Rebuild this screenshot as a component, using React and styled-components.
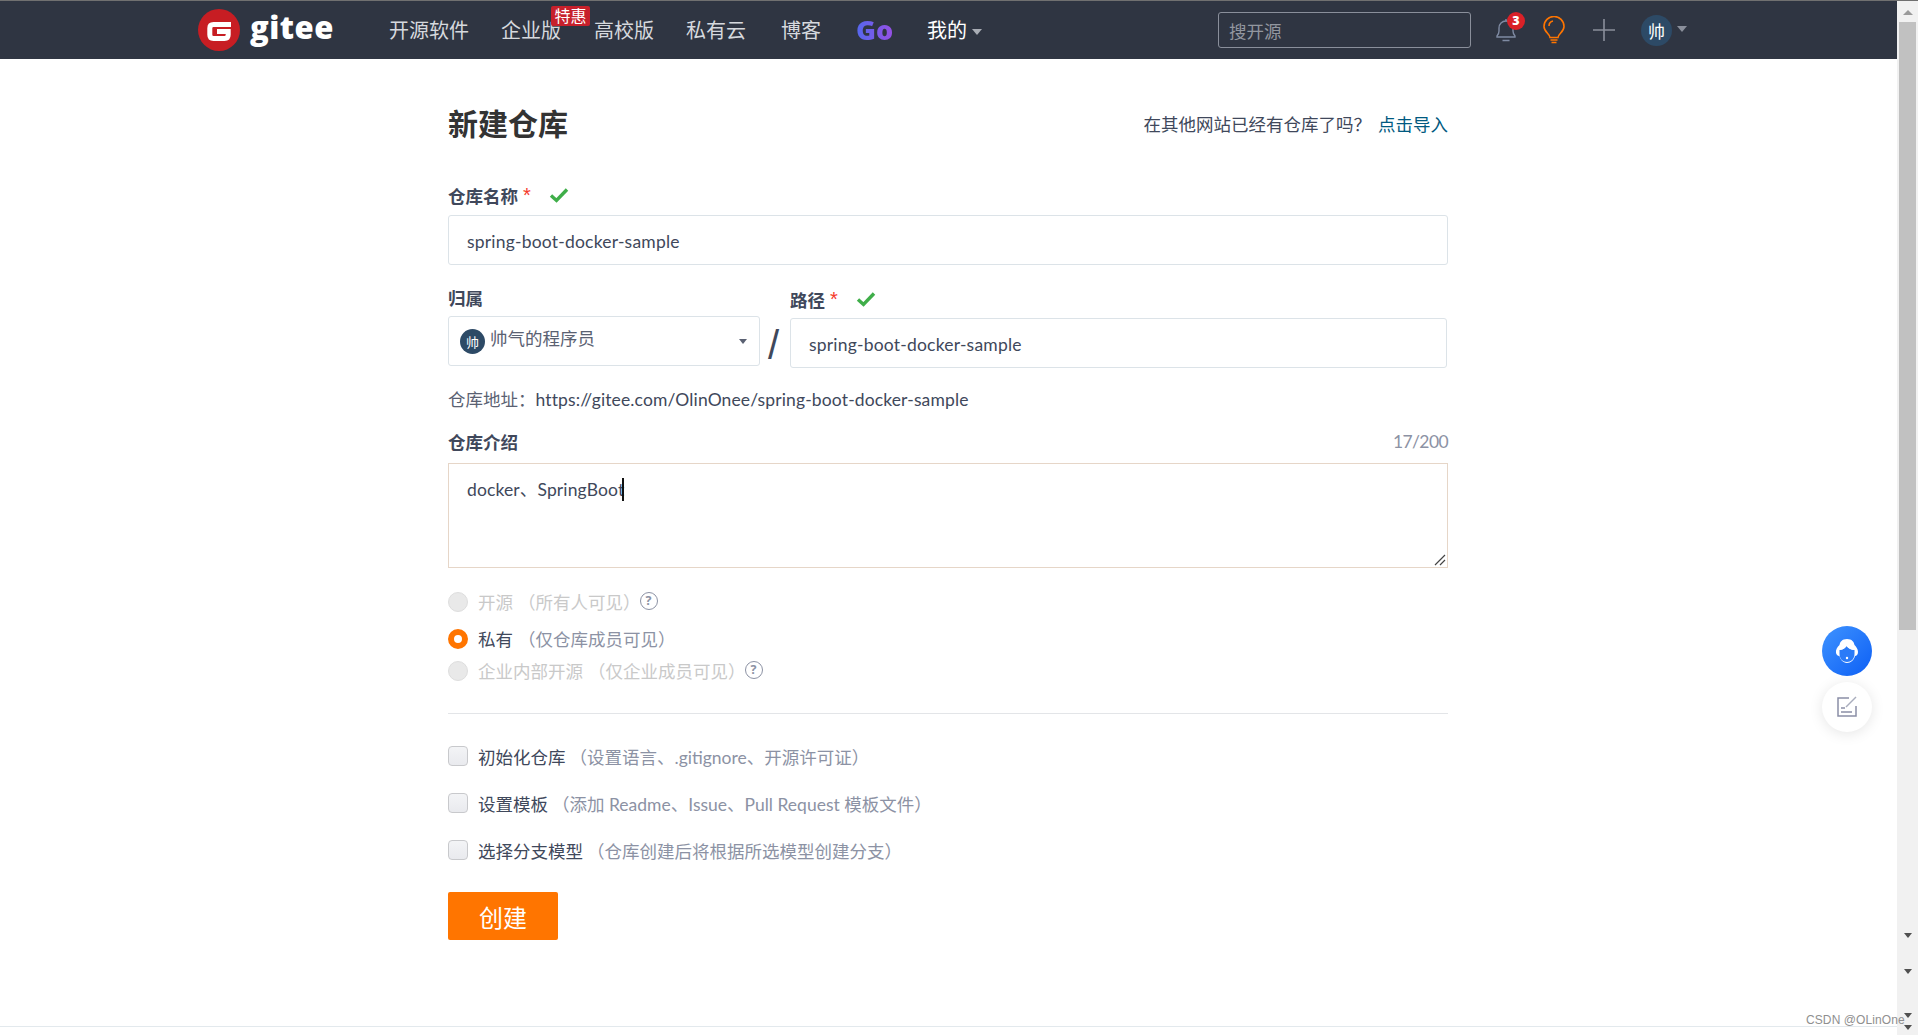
import React from "react";
import styled, { createGlobalStyle } from "styled-components";

const Global = createGlobalStyle`
  html, body { margin: 0; padding: 0; background: #fff; overflow: hidden; }
  body { font-family: Lato, "Noto Sans CJK SC", sans-serif; color: #40485b; }
  * { box-sizing: border-box; }
`;

const Frame = styled.div`
  position: relative; width: 1918px; height: 1035px; display: flex; flex-direction: column; overflow: hidden;
`;
const TopLine = styled.div`height: 1px; background: #707070; flex: none;`;
const Body = styled.div`flex: 1; display: flex; min-height: 0;`;
const Page = styled.div`flex: 1; display: flex; flex-direction: column; min-width: 0;`;

const Scrollbar = styled.div`
  width: 21px; flex: none; background: #f1f1f1; display: flex; flex-direction: column; align-items: center;
`;
const ArrowUp = styled.div`
  margin-top: 9px; width: 0; height: 0; border-left: 5px solid transparent; border-right: 5px solid transparent; border-bottom: 5px solid #9a9a9a;
`;
const Thumb = styled.div`margin-top: 7px; width: 17px; height: 608px; background: #c1c1c1;`;
const ArrowDown = styled.div`
  margin-top: ${p => p.$gap}px; width: 0; height: 0; border-left: 4.5px solid transparent; border-right: 4.5px solid transparent; border-top: 5px solid #505050;
`;

const Nav = styled.header`
  height: 58px; flex: none; background: #2f3542; display: flex; align-items: center; padding-left: 198px; font-family: Lato, "Noto Sans CJK SC", sans-serif;
`;
const Logo = styled.div`display: flex; align-items: center; gap: 10px; width: 191px; flex: none;`;
const LogoWord = styled.span`
  font: 800 31px/42px "Open Sans", sans-serif; color: #fff; letter-spacing: 0.5px; position: relative; top: -3px;
`;
const NavItem = styled.a`
  position: relative; flex: none; margin-right: ${p => p.$mr}px; font-size: 20px; line-height: 58px; color: ${p => p.$light ? "#fff" : "#d6d9de"};
`;
const Ribbon = styled.span`
  position: absolute; left: 50px; top: 5px; width: 39px; height: 20px; background: #c7202b; color: #fff; border-radius: 2px;
  font-size: 16px; line-height: 20px; text-align: center;
`;
const GoWord = styled.span`
  flex: none; margin-right: 34px; font: 800 27px/58px "Open Sans", sans-serif; width: 37px;
  background: linear-gradient(90deg, #5468ee, #9650e4); -webkit-background-clip: text; background-clip: text; color: transparent;
`;
const NavCaret = styled.i`
  flex: none; margin: 4px 236px 0 5px; width: 0; height: 0; border-left: 5.5px solid transparent; border-right: 5.5px solid transparent; border-top: 6px solid #a9adb5;
`;
const Search = styled.input`
  flex: none; width: 253px; height: 36px; background: transparent; border: 1px solid #8a8f9b; border-radius: 3px; padding: 0 10px; color: #fff;
  font: 17.5px "Noto Sans CJK SC", sans-serif; outline: none;
  &::placeholder { color: #92969f; opacity: 1; }
`;
const IconSlot = styled.div`position: relative; flex: none; margin-left: ${p => p.$ml}px; display: flex; align-items: center;`;
const Badge = styled.span`
  position: absolute; left: 13px; top: -4px; width: 18px; height: 18px; border-radius: 50%; background: #da2128; color: #fff;
  font: 800 12.5px/18px "Open Sans", sans-serif; text-align: center;
`;
const Avatar = styled.span`
  flex: none; width: ${p => p.$size}px; height: ${p => p.$size}px; border-radius: 50%; background: #2d4a66; color: #fff; display: inline-flex; align-items: center; justify-content: center;
  font-size: ${p => p.$fs}px; margin-left: ${p => p.$ml || 0}px;
`;
const AvatarCaret = styled.i`
  margin: -3px 0 0 5px; width: 0; height: 0; border-left: 5.5px solid transparent; border-right: 5.5px solid transparent; border-top: 6px solid #8a8f9b;
`;

const Main = styled.main`width: 1000px; margin-left: 448px; flex: 1;`;
const TitleRow = styled.div`display: flex; align-items: center; justify-content: space-between; height: 40px; margin-top: 44px;`;
const Title = styled.h1`margin: 0; font-size: 30px; font-weight: 700; color: #333; line-height: 40px;`;
const ImportHint = styled.div`font-size: 17.5px; color: #40485b;`;
const ImportLink = styled.a`color: #005980; margin-left: 7px;`;

const Label = styled.div`
  display: flex; align-items: center; justify-content: space-between; height: 24px; font-size: 17.5px; font-weight: 700; color: #40485b; margin-top: ${p => p.$mt || 0}px;
`;
const LabelLeft = styled.span`display: inline-flex; align-items: center;`;
const Star = styled.span`color: #f5392b; font: 400 20px/20px "Liberation Sans", sans-serif; margin-left: 5px;`;
const Check = styled.svg`margin-left: 18px; width: 20px; height: 16px;`;
const Counter = styled.span`font-weight: 400; color: #8c92a4; letter-spacing: -.6px;`;

const TextInput = styled.input`
  display: block; width: 100%; height: 50px; border: 1px solid #dce3e8; border-radius: 3px; padding: 2px 18px 0; margin-top: ${p => p.$mt}px;
  font: 17.5px Lato, "Noto Sans CJK SC", sans-serif; letter-spacing: .2px; color: #40485b; outline: none; background: #fff;
`;
const PathRow = styled.div`display: flex; margin-top: 20px;`;
const OwnerCol = styled.div`width: 312px; flex: none;`;
const Slash = styled.div`
  width: 30px; flex: none; margin-top: 35px; padding-right: 3px; font: 40px/50px "Liberation Sans", sans-serif; color: #40485b; text-align: center;
`;
const PathCol = styled.div`flex: 1; margin-top: 2px; margin-right: 1px;`;
const Select = styled.div`
  display: flex; align-items: center; height: 50px; border: 1px solid #dce3e8; border-radius: 3px; padding: 0 12px 0 11px; margin-top: 7px; font-size: 17.5px; color: #5a6172;
`;
const OwnerName = styled.span`flex: 1; margin-left: 5px; line-height: 1; margin-top: -4px;`;
const SelectCaret = styled.i`
  width: 0; height: 0; border-left: 4.5px solid transparent; border-right: 4.5px solid transparent; border-top: 5px solid #5a6172;
`;
const Address = styled.div`font-size: 17.5px; line-height: 24px; margin-top: 18px; color: #40485b; letter-spacing: .13px;`;
const AddressKey = styled.span`color: #5a6172; letter-spacing: 0;`;

const TextArea = styled.div`
  position: relative; height: 105px; margin-top: 10px; border: 1px solid #e6d6c8; padding: 14px 18px; font-size: 17.5px; line-height: 24px; letter-spacing: .13px; color: #40485b;
`;
const Caret = styled.span`
  display: inline-block; width: 2px; height: 23px; background: #111; margin-left: -2px; vertical-align: -5px;
`;
const Grip = styled.svg`position: absolute; right: 1px; bottom: 1px; width: 12px; height: 12px;`;

const Radios = styled.div`margin-top: 21px;`;
const RadioRow = styled.label`
  display: flex; align-items: center; height: 24px; margin-top: ${p => p.$mt}px; font-size: 17.5px; color: ${p => p.$off ? "#c9c9c9" : "#40485b"};
`;
const RadioDot = styled.span`
  flex: none; width: 20px; height: 20px; border-radius: 50%; margin: 2px 10px 0 0;
  ${p => p.$on ? "border: 6px solid #ff7500; background: #fff;" : "border: 1px solid #dedede; background: #e9e9e9;"}
`;
const RadioNote = styled.span`margin-left: 5px; color: ${p => p.$off ? "#c9c9c9" : "#8c92a4"};`;
const Help = styled.span`
  flex: none; width: 18px; height: 18px; margin-left: -1px; border: 1.5px solid #8c92a4; border-radius: 50%; color: #8c92a4; font: 700 12.5px/15px "Open Sans", sans-serif; text-align: center;
`;
const Divider = styled.hr`margin: 31px 0 0; border: 0; border-top: 1px solid #e3e5e8;`;
const Checks = styled.div`margin-top: 30px;`;
const CheckRow = styled.label`
  display: flex; align-items: center; height: 24px; margin-top: ${p => p.$mt}px; font-size: 17.5px; color: #40485b;
`;
const Box = styled.span`
  flex: none; width: 20px; height: 20px; margin: 0 10px 0 0; border-radius: 4px; border: 1px solid #c8c9cc; background: linear-gradient(#f3f4f6, #e9eaee);
`;
const CheckNote = styled.span`margin-left: 4px; color: #8c92a4;`;
const Submit = styled.button`
  display: block; width: 110px; height: 48px; margin-top: 30px; border: 0; border-radius: 2px; background: #ff7500; color: #fff;
  font: 400 24px "Noto Sans CJK SC", sans-serif;
`;
const FooterLine = styled.div`height: 9px; flex: none; border-top: 1px solid #e3e9ed; background: #fff;`;

const Float = styled.div`
  position: absolute; left: 1822px; top: ${p => p.$top}px; width: 50px; height: 50px; border-radius: 50%; display: flex; align-items: center; justify-content: center;
  background: ${p => p.$blue ? "linear-gradient(135deg, #3f93ff, #0d5ff5)" : "#fff"};
  box-shadow: ${p => p.$blue ? "none" : "0 2px 14px rgba(0,0,0,.1)"};
`;
const Watermark = styled.div`
  position: absolute; left: 1806px; top: 1012px; font: 12px/16px "Liberation Sans", sans-serif; letter-spacing: .1px; color: #8f8f8f; white-space: nowrap;
`;

const GreenCheck = () => (
  <Check viewBox="0 0 20 16"><path d="M2 8.500l5.500 5L18 2.500" fill="none" stroke="#3fae49" strokeWidth="3.400" /></Check>
);

export default function App() {
  return (
    <Frame>
      <Global />
      <TopLine />
      <Body>
        <Page>
          <Nav>
            <Logo>
              <svg width="42" height="42" viewBox="0 0 42 42">
                <circle cx="21" cy="21" r="21" fill="#c71d23" />
                <path d="M33 15.500H15.500Q11.800 15.500 11.800 19.200V25.800Q11.800 29.500 15.500 29.500H26.500Q30.200 29.500 30.200 25.800V22.500H19" fill="none" stroke="#fff" strokeWidth="5" />
              </svg>
              <LogoWord>gitee</LogoWord>
            </Logo>
            <NavItem $mr={32}>开源软件</NavItem>
            <NavItem $mr={33}>企业版<Ribbon>特惠</Ribbon></NavItem>
            <NavItem $mr={32}>高校版</NavItem>
            <NavItem $mr={35}>私有云</NavItem>
            <NavItem $mr={35}>博客</NavItem>
            <GoWord>Go</GoWord>
            <NavItem $mr={0} $light>我的</NavItem>
            <NavCaret />
            <Search placeholder="搜开源" />
            <IconSlot $ml={23}>
              <svg width="24" height="28" viewBox="0 0 24 28" fill="none" stroke="#7f8ba3" strokeWidth="1.400">
                <path d="M3 20c1.500-1.500 2-2.500 2-5v-3c0-4 3-7 7-7s7 3 7 7v3c0 2.500.5 3.500 2 5v1H3z" />
                <path d="M8.500 24.500h7M12 3v2" />
              </svg>
              <Badge>3</Badge>
            </IconSlot>
            <IconSlot $ml={24}>
              <svg width="24" height="28" viewBox="0 0 24 28" fill="none" stroke="#ff7500" strokeWidth="1.600">
                <path d="M8 21.500c0-3.500-6-5.500-6-11a10 10 0 0 1 20 0c0 5.500-6 7.500-6 11z" />
                <path d="M8.500 24h7M9.500 26.500h5M7 10c0-2.500 1.500-4.500 4-5" />
              </svg>
            </IconSlot>
            <IconSlot $ml={27}>
              <svg width="22" height="22" viewBox="0 0 22 22" stroke="#8a8f9b" strokeWidth="1.600"><path d="M0 11h22M11 0v22" /></svg>
            </IconSlot>
            <Avatar $size={31} $fs={17} $ml={26}>帅</Avatar>
            <AvatarCaret />
          </Nav>
          <Main>
            <TitleRow>
              <Title>新建仓库</Title>
              <ImportHint>在其他网站已经有仓库了吗？<ImportLink>点击导入</ImportLink></ImportHint>
            </TitleRow>
            <Label $mt={40}><LabelLeft>仓库名称<Star>*</Star><GreenCheck /></LabelLeft></Label>
            <TextInput $mt={8} defaultValue="spring-boot-docker-sample" />
            <PathRow>
              <OwnerCol>
                <Label>归属</Label>
                <Select>
                  <Avatar $size={25} $fs={13}>帅</Avatar>
                  <OwnerName>帅气的程序员</OwnerName>
                  <SelectCaret />
                </Select>
              </OwnerCol>
              <Slash>/</Slash>
              <PathCol>
                <Label><LabelLeft>路径<Star>*</Star><GreenCheck /></LabelLeft></Label>
                <TextInput $mt={7} defaultValue="spring-boot-docker-sample" />
              </PathCol>
            </PathRow>
            <Address><AddressKey>仓库地址：</AddressKey>https://gitee.com/OlinOnee/spring-boot-docker-sample</Address>
            <Label $mt={17}>仓库介绍<Counter>17/200</Counter></Label>
            <TextArea>
              docker、SpringBoot<Caret />
              <Grip viewBox="0 0 12 12" stroke="#444" strokeWidth="1.200"><path d="M1 11L11 1M6 11l5-5" /></Grip>
            </TextArea>
            <Radios>
              <RadioRow $mt={0} $off><RadioDot />开源<RadioNote $off>（所有人可见）</RadioNote><Help>?</Help></RadioRow>
              <RadioRow $mt={13}><RadioDot $on />私有<RadioNote>（仅仓库成员可见）</RadioNote></RadioRow>
              <RadioRow $mt={8} $off><RadioDot />企业内部开源<RadioNote $off>（仅企业成员可见）</RadioNote><Help>?</Help></RadioRow>
            </Radios>
            <Divider />
            <Checks>
              <CheckRow $mt={0}><Box />初始化仓库<CheckNote>（设置语言、.gitignore、开源许可证）</CheckNote></CheckRow>
              <CheckRow $mt={23}><Box />设置模板<CheckNote>（添加 Readme、Issue、Pull Request 模板文件）</CheckNote></CheckRow>
              <CheckRow $mt={23}><Box />选择分支模型<CheckNote>（仓库创建后将根据所选模型创建分支）</CheckNote></CheckRow>
            </Checks>
            <Submit>创建</Submit>
          </Main>
          <FooterLine />
        </Page>
        <Scrollbar>
          <ArrowUp />
          <Thumb />
          <ArrowDown $gap={303} />
          <ArrowDown $gap={31} />
          <ArrowDown $gap={39} />
          <ArrowDown $gap={7} />
        </Scrollbar>
      </Body>
      <Float $top={626} $blue>
        <svg width="36" height="36" viewBox="0 0 36 36">
          <path d="M18 6c-5 0-7 3-7.500 6C8 14 6.500 17 7 20c.5 2 2.500 3.500 3.500 3 .5 3 3.500 7 7.500 7s7-3 8-7c1.500 0 3-1.500 3-4 0-3-2-5.500-3.500-7C25 9 23 6 18 6z" fill="#fff" />
          <path d="M10.500 17c4-.5 6-2.500 7-4 2 2.500 5 4 8 4v4c0 5-3.500 8-7.500 8s-7.500-3-7.500-8z" fill="#2a7bf8" />
          <path d="M10.500 17c4-.5 6-2.500 7-4 2 2.500 5 4 8 4v-2l-7-5-8 4z" fill="#fff" />
          <circle cx="18" cy="25" r="1.200" fill="#fff" />
        </svg>
      </Float>
      <Float $top={682}>
        <svg width="22" height="22" viewBox="0 0 22 22" fill="none" stroke="#8a8fa6" strokeWidth="1.500">
          <path d="M13 2H2v18h18V10" />
          <path d="M10 11L20 1" stroke="#a9adbd" />
          <path d="M5 12h4M5 16h11" />
        </svg>
      </Float>
      <Watermark>CSDN @OLinOne</Watermark>
    </Frame>
  );
}
